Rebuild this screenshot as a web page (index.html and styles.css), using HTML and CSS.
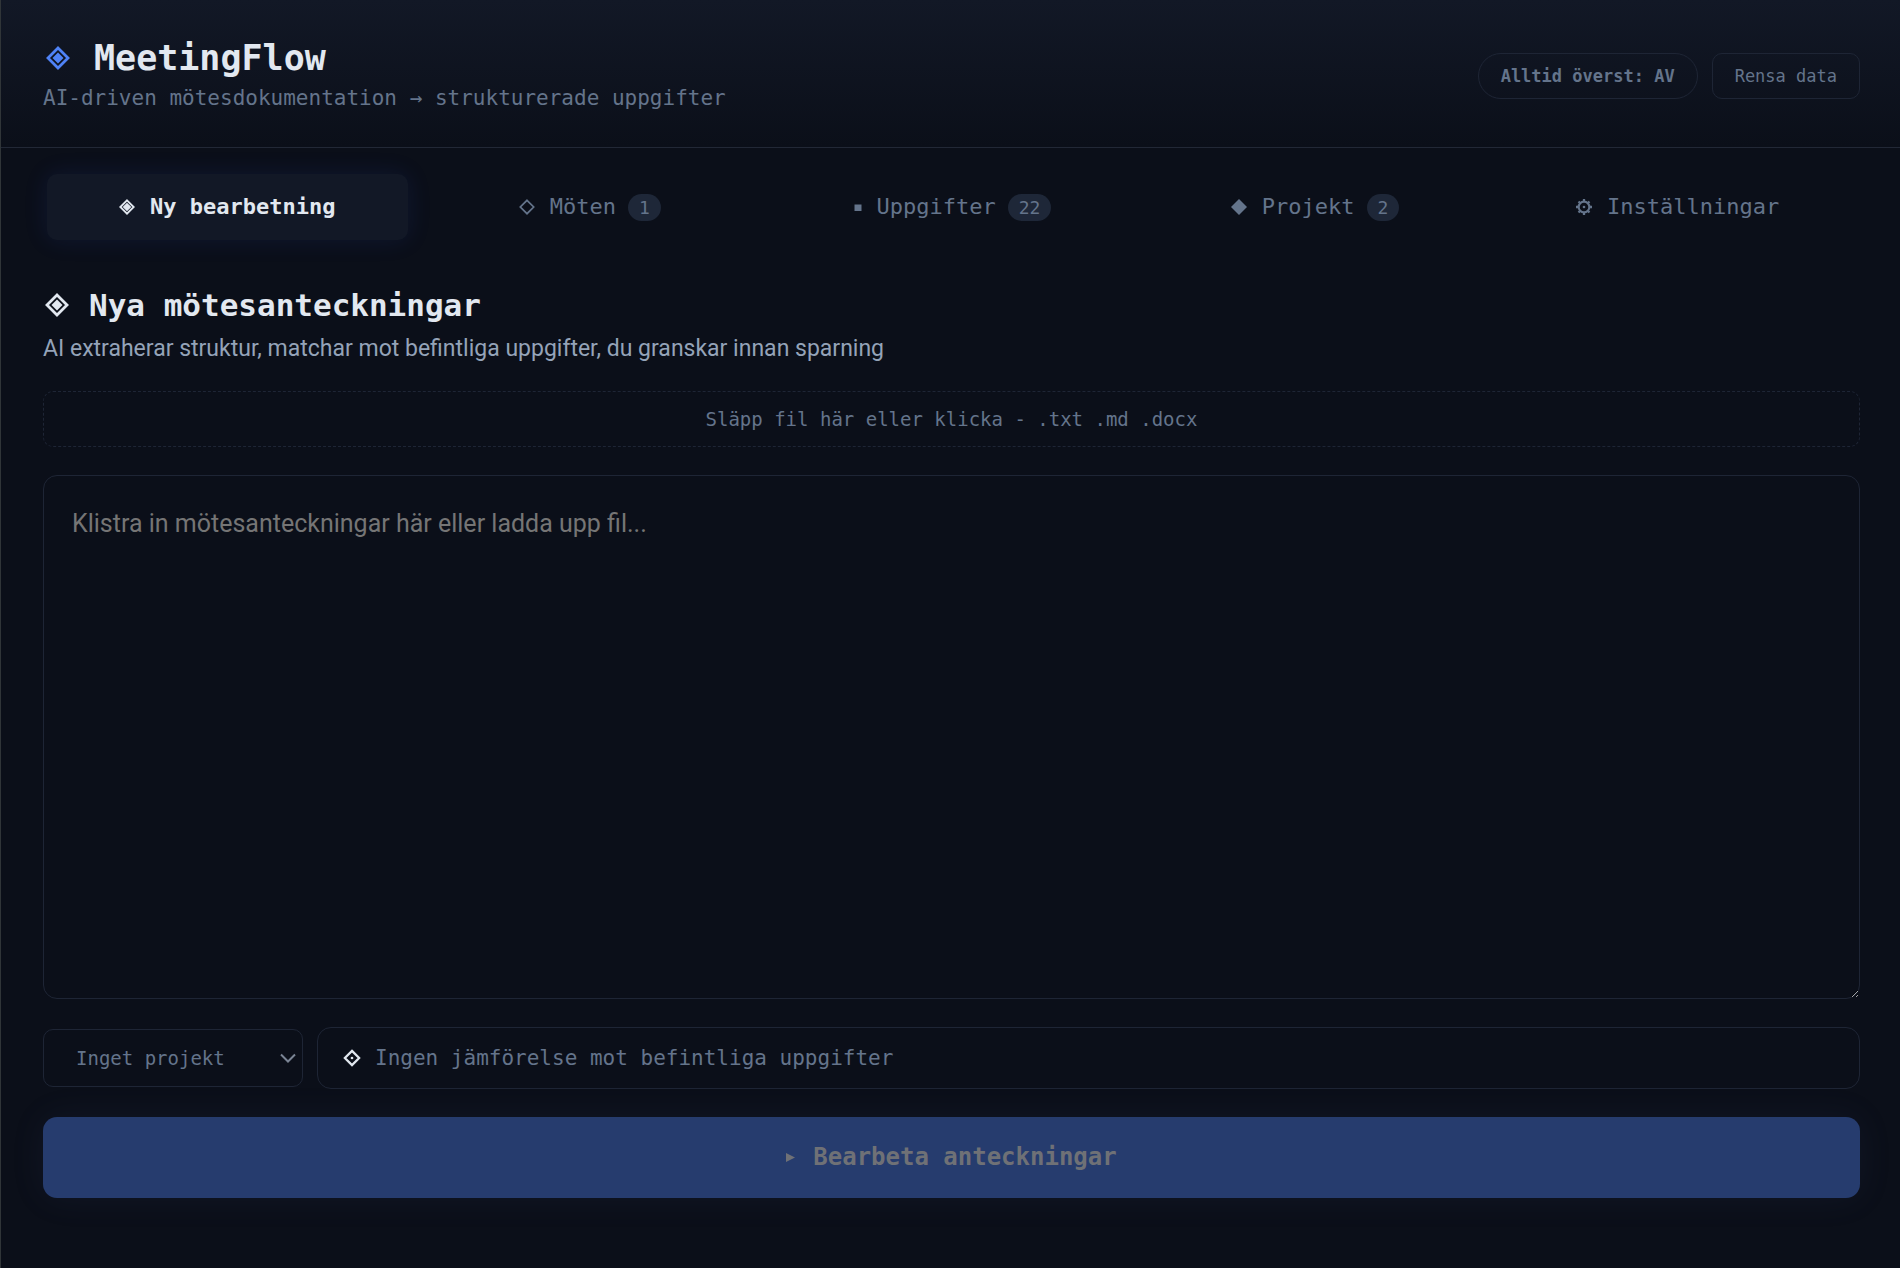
FILE: index.html
```
<!DOCTYPE html>
<html lang="sv">
<head>
    <meta charset="UTF-8">
    <meta name="viewport" content="width=device-width, initial-scale=1.0">
    <title>MeetingFlow</title>
    <link rel="stylesheet" href="styles.css">
</head>
<body>
    <header class="header">
        <div class="brand">
            <h1 class="brand-title">
                <svg class="brand-icon" viewBox="0 0 24 24"><path d="M12 2 22 12 12 22 2 12Z" fill="none" stroke="currentColor" stroke-width="2.8"/><path d="M12 6.500 17.500 12 12 17.500 6.500 12Z" fill="currentColor"/></svg>
                MeetingFlow
            </h1>
            <p class="brand-tagline">AI-driven mötesdokumentation → strukturerade uppgifter</p>
        </div>
        <div class="header-actions">
            <button type="button" class="btn-small btn-pill">Alltid överst: AV</button>
            <button type="button" class="btn-small">Rensa data</button>
        </div>
    </header>

    <nav class="tabs">
        <button type="button" class="tab active">
            <svg class="tab-icon" viewBox="0 0 24 24"><path d="M12 2 22 12 12 22 2 12Z" fill="none" stroke="currentColor" stroke-width="2.8"/><path d="M12 5.500 18.500 12 12 18.500 5.500 12Z" fill="currentColor"/></svg>
            Ny bearbetning
        </button>
        <button type="button" class="tab">
            <svg class="tab-icon" viewBox="0 0 24 24"><path d="M12 2 22 12 12 22 2 12Z" fill="none" stroke="currentColor" stroke-width="2.6"/></svg>
            Möten <span class="badge">1</span>
        </button>
        <button type="button" class="tab">
            <svg class="tab-icon tab-icon-small" viewBox="0 0 8 8"><path d="M0.5 1.5h7v7h-7z" fill="currentColor"/></svg>
            Uppgifter <span class="badge">22</span>
        </button>
        <button type="button" class="tab">
            <svg class="tab-icon" viewBox="0 0 24 24"><path d="M12 0 24 12 12 24 0 12Z" fill="currentColor"/></svg>
            Projekt <span class="badge">2</span>
        </button>
        <button type="button" class="tab">
            <svg class="tab-icon" viewBox="0 0 24 24"><g stroke="currentColor" fill="none"><circle cx="12" cy="12" r="8" stroke-width="3.2"/><path d="M12 0v4M12 20v4M0 12h4M20 12h4M3.800 3.800l2 2M18.200 18.200l2 2M3.800 20.200l2-2M18.200 5.800l2-2" stroke-width="3.400"/></g><circle cx="12" cy="12" r="2" fill="currentColor"/></svg>
            Inställningar
        </button>
    </nav>

    <main class="content">
        <h2 class="section-title">
            <svg class="section-icon" viewBox="0 0 24 24"><path d="M12 2 22 12 12 22 2 12Z" fill="none" stroke="currentColor" stroke-width="2.8"/><path d="M12 6.500 17.500 12 12 17.500 6.500 12Z" fill="currentColor"/></svg>
            Nya mötesanteckningar
        </h2>
        <p class="section-text">AI extraherar struktur, matchar mot befintliga uppgifter, du granskar innan sparning</p>

        <button type="button" class="dropzone">Släpp fil här eller klicka - .txt .md .docx</button>

        <textarea class="notes" aria-label="Mötesanteckningar" placeholder="Klistra in mötesanteckningar här eller ladda upp fil..."></textarea>

        <div class="options">
            <div class="project">
                <select class="project-select" aria-label="Projekt">
                    <option>Inget projekt</option>
                </select>
                <svg class="project-arrow" viewBox="0 0 16 10"><path d="M1 1.500l7 7 7-7" fill="none" stroke="currentColor" stroke-width="2"/></svg>
            </div>
            <div class="compare">
                <svg class="compare-icon" viewBox="0 0 24 24"><path d="M12 2.500 21.500 12 12 21.500 2.500 12Z" fill="none" stroke="currentColor" stroke-width="3"/><circle cx="12" cy="12" r="1.800" fill="currentColor"/></svg>
                Ingen jämförelse mot befintliga uppgifter
            </div>
        </div>

        <button type="button" class="submit" disabled>
            <svg class="submit-icon" viewBox="0 0 8 8"><path d="M0 0 8 4 0 8Z" fill="currentColor"/></svg>
            Bearbeta anteckningar
        </button>
    </main>
</body>
</html>
```
FILE: styles.css
```
:root {
    --bg: #0b0f19;
    --surface: #121826;
    --border: #1e2535;
    --text: #e2e8f0;
    --muted: #64748b;
    --mono: "DejaVu Sans Mono", monospace;
    --sans: Roboto, sans-serif;
}
* {
    box-sizing: border-box;
}
body {
    display: flex;
    flex-direction: column;
    min-height: 100vh;
    margin: 0;
    border-left: 1px solid #303538;
    background-color: var(--bg);
    color: var(--text);
    font-family: var(--mono);
}
h1, h2, p {
    margin: 0;
}
button, select, textarea {
    margin: 0;
    font-family: inherit;
}
svg {
    flex: none;
}

/* Header */
.header {
    display: flex;
    justify-content: space-between;
    align-items: center;
    padding: 36px 40px 32px 42px;
    border-bottom: 1px solid #222836;
    background: linear-gradient(180deg, var(--surface), var(--bg));
}
.brand-title {
    display: flex;
    align-items: center;
    gap: 24px;
    padding-left: 3px;
    font-size: 35px;
    line-height: 44px;
}
.brand-icon {
    width: 24px;
    height: 24px;
    color: #4f83f7;
}
.brand-tagline {
    margin-top: 2px;
    color: var(--muted);
    font-size: 21px;
    line-height: 33px;
}
.header-actions {
    display: flex;
    gap: 14px;
}
.btn-small {
    padding: 0 22px;
    border: 1px solid var(--border);
    border-radius: 10px;
    background: transparent;
    color: var(--muted);
    font-size: 17px;
    line-height: 44px;
}
.btn-pill {
    border-radius: 24px;
    font-weight: 600;
}

/* Tabs */
.tabs {
    display: grid;
    grid-template-columns: repeat(5, 1fr);
    gap: 2px;
    padding: 26px 42px 24px 46px;
}
.tab {
    display: flex;
    justify-content: center;
    align-items: center;
    gap: 12px;
    padding: 16px;
    border: none;
    border-radius: 10px;
    background: transparent;
    color: var(--muted);
    font-size: 22px;
    line-height: 34px;
}
.tab.active {
    background-color: var(--surface);
    box-shadow: 0 0 24px rgba(50, 80, 220, 0.12);
    color: var(--text);
    font-weight: 600;
}
.tab-icon {
    width: 16px;
    height: 16px;
    margin-right: 3px;
}
.tab-icon-small {
    width: 8px;
    height: 8px;
}
.badge {
    padding: 0 11px;
    border-radius: 14px;
    background-color: #1e2738;
    font-size: 18px;
    line-height: 27px;
}

/* New notes */
.content {
    display: flex;
    flex: 1;
    flex-direction: column;
    padding: 20px 40px 70px 42px;
}
.section-title {
    display: flex;
    align-items: center;
    gap: 20px;
    padding-left: 2px;
    font-size: 31px;
    line-height: 42px;
}
.section-icon {
    width: 24px;
    height: 24px;
}
.section-text {
    margin-top: 4px;
    margin-bottom: 23px;
    color: #94a3b8;
    font-family: var(--sans);
    font-size: 23px;
    line-height: 38px;
}
.dropzone {
    margin-bottom: 28px;
    padding: 14px;
    border: 1px dashed var(--border);
    border-radius: 10px;
    background: transparent;
    color: var(--muted);
    font-size: 19px;
    line-height: 26px;
}
.notes {
    flex: 1;
    min-height: 240px;
    margin-bottom: 28px;
    padding: 28px;
    border: 1px solid var(--border);
    border-radius: 14px;
    background: transparent;
    color: var(--text);
    font-family: var(--sans);
    font-size: 25px;
    line-height: 40px;
    resize: vertical;
}
.notes::placeholder {
    color: #757575;
}
.options {
    display: flex;
    align-items: center;
    gap: 14px;
    margin-bottom: 28px;
}
.project {
    display: grid;
    flex: none;
    align-items: center;
    width: 260px;
}
.project-select {
    grid-area: 1 / 1;
    height: 58px;
    padding: 0 32px;
    border: 1px solid var(--border);
    border-radius: 10px;
    appearance: none;
    background: transparent;
    color: var(--muted);
    font-size: 19px;
}
.project-arrow {
    grid-area: 1 / 1;
    justify-self: end;
    width: 16px;
    height: 10px;
    margin-right: 7px;
    color: #7a8494;
    pointer-events: none;
}
.compare {
    display: flex;
    flex: 1;
    align-items: center;
    gap: 14px;
    padding: 14px 25px;
    border: 1px solid var(--border);
    border-radius: 14px;
    color: var(--muted);
    font-size: 21px;
    line-height: 32px;
}
.compare-icon {
    width: 18px;
    height: 18px;
    color: var(--text);
}
.submit {
    display: flex;
    justify-content: center;
    align-items: center;
    gap: 18px;
    padding: 24px;
    border: none;
    border-radius: 14px;
    background-color: #263c6e;
    box-shadow: 0 0 36px rgba(100, 116, 180, 0.08);
    color: #6f7176;
    font-size: 24px;
    font-weight: 700;
    line-height: 33px;
}
.submit-icon {
    width: 9px;
    height: 9px;
}
```
